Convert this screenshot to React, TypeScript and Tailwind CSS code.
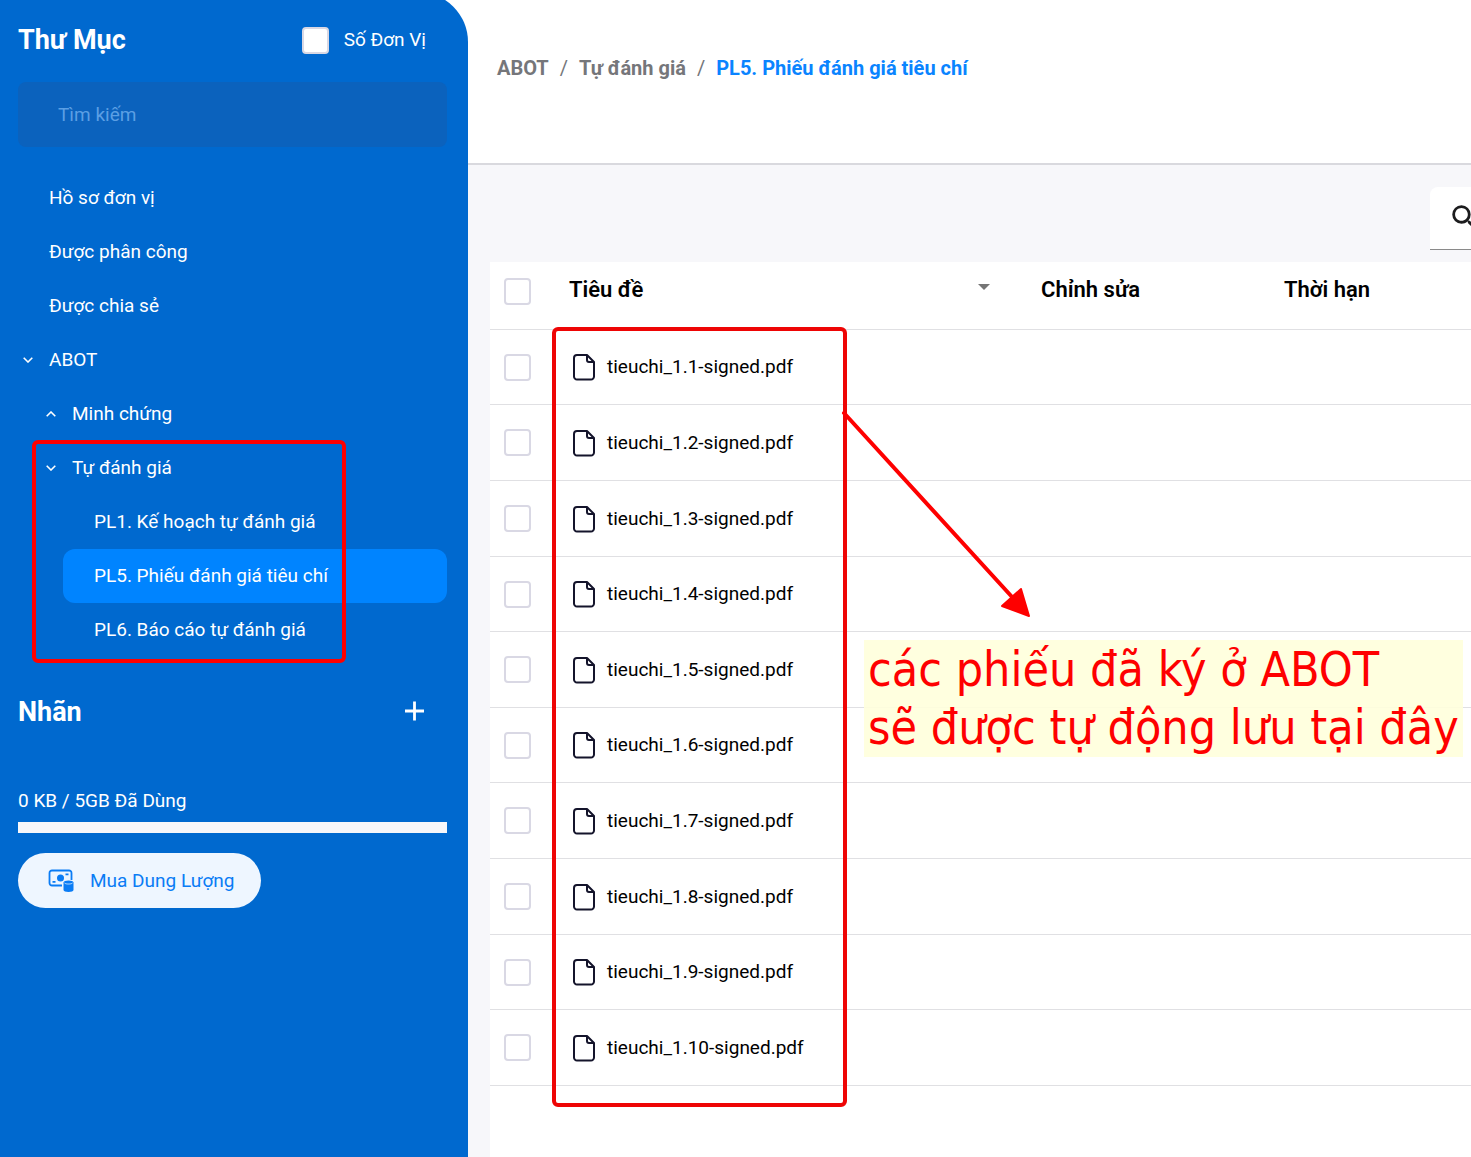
import { useState } from "react";

interface TreeItem {
  label: string;
  level: number;
  state?: "open" | "closed";
}

const folders: TreeItem[] = [
  { label: "Hồ sơ đơn vị", level: 0 },
  { label: "Được phân công", level: 0 },
  { label: "Được chia sẻ", level: 0 },
  { label: "ABOT", level: 0, state: "open" },
  { label: "Minh chứng", level: 1, state: "closed" }
];

const selfReview: TreeItem[] = [
  { label: "Tự đánh giá", level: 1, state: "open" },
  { label: "PL1. Kế hoạch tự đánh giá", level: 2 },
  { label: "PL5. Phiếu đánh giá tiêu chí", level: 2 },
  { label: "PL6. Báo cáo tự đánh giá", level: 2 }
];

const files = Array.from({ length: 10 }, (_, i) => `tieuchi_1.${i + 1}-signed.pdf`);

const indents = ["ml-0", "ml-[23px]", "ml-[45px]"];

function Chevron({ up }: { up?: boolean }) {
  return (
    <svg viewBox="0 0 10 6" className="h-[6px] w-[10px]" fill="none" stroke="currentColor" strokeWidth={1.6}>
      <path d={up ? "M.7 5.2 5 1l4.3 4.2" : "M.7.8 5 5 9.3.8"} />
    </svg>
  );
}

function FileIcon() {
  return (
    <svg viewBox="0 0 22 28" className="h-7 w-[22px] shrink-0" fill="none" stroke="#14142b" strokeWidth={2} strokeLinejoin="round">
      <path d="M4 2h10l7 7v14.5a3 3 0 0 1-3 3H4a3 3 0 0 1-3-3V5a3 3 0 0 1 3-3Z" />
      <path d="M14 2v5a2 2 0 0 0 2 2h5" />
    </svg>
  );
}

function StorageIcon() {
  return (
    <svg viewBox="0 0 26 24" className="h-6 w-[26px]" fill="none" stroke="currentColor" strokeWidth={1.8}>
      <path d="M14 16.5H4A2.5 2.5 0 0 1 1.5 14V4A2.5 2.5 0 0 1 4 1.500h17A2.500 2.500 0 0 1 23.500 4v7" />
      <circle cx="12.500" cy="9" r="3.500" fill="currentColor" stroke="none" />
      <path d="M17.500 5.300h3M4.500 12.800h3" />
      <path
        d="M15.500 13.500c0-1.200 2.200-2 5-2s5 .8 5 2v7.500c0 1.200-2.200 2-5 2s-5-.8-5-2Z"
        fill="currentColor"
        stroke="none"
      />
      <path d="M16.500 14c1 .9 2.500 1 4 1s3-.1 4-1" stroke="#eef6ff" strokeWidth={0.8} />
    </svg>
  );
}

function Checkbox({ id, label }: { id: string; label?: string }) {
  return (
    <input
      id={id}
      type="checkbox"
      aria-label={label}
      className="block size-[27px] shrink-0 appearance-none rounded border-2 border-[#d9d8e4] bg-white checked:bg-[#0084ff]"
    />
  );
}

export default function App() {
  const [active, setActive] = useState("PL5. Phiếu đánh giá tiêu chí");

  const renderItem = (item: TreeItem) => (
    <li key={item.label} className={indents[item.level]}>
      <button
        type="button"
        onClick={() => setActive(item.label)}
        className={`flex h-[54px] w-full items-center rounded-xl text-left ${
          item.label === active ? "bg-[#0084ff]" : ""
        }`}
      >
        <span className="flex w-[31px] shrink-0 pl-[5px]">
          {item.state && <Chevron up={item.state === "closed"} />}
        </span>
        {item.label}
      </button>
    </li>
  );

  return (
    <div className="flex min-h-screen overflow-hidden bg-white font-[Roboto,sans-serif] text-[19px] leading-6 text-black">
      {/* Sidebar */}
      <aside className="-mt-2 w-[468px] shrink-0 rounded-tr-[50px] bg-[#0069cf] pt-8 pr-[21px] pl-[18px] text-white">
        <div className="flex items-end justify-between pr-[21px]">
          <h1 className="text-[27px] leading-8 font-bold">Thư Mục</h1>
          <label htmlFor="show-units" className="flex h-8 items-center gap-[15px]">
            <Checkbox id="show-units" />
            Số Đơn Vị
          </label>
        </div>

        <input
          type="search"
          aria-label="Tìm kiếm"
          placeholder="Tìm kiếm"
          className="mt-[26px] h-[65px] w-full rounded-lg bg-[#0b62bd] px-10 outline-none placeholder:text-[#5b9fe4]"
        />

        <nav className="mt-6">
          <ul>{folders.map(renderItem)}</ul>
          <div className="relative">
            <ul>{selfReview.map(renderItem)}</ul>
            <div className="pointer-events-none absolute -top-px left-[14px] h-[223px] w-[314px] rounded-md border-4 border-[#fe0000]" />
          </div>
        </nav>

        <div className="mt-[39px] flex items-center justify-between pr-[21px]">
          <h2 className="text-[27px] leading-8 font-bold">Nhãn</h2>
          <button type="button" aria-label="Thêm nhãn">
            <svg viewBox="0 0 24 24" className="size-6" fill="none" stroke="currentColor" strokeWidth={2.8}>
              <path d="M12.500 1.500v19M3 11h19" />
            </svg>
          </button>
        </div>

        <p className="mt-[61px]">0 KB / 5GB Đã Dùng</p>
        <div className="mt-[9px] h-[11px] bg-[#f7f7fa]" />
        <button
          type="button"
          className="mt-5 flex h-[55px] items-center gap-4 rounded-full bg-[#eef6ff] pr-[26px] pl-[30px] text-[#0a7cf5]"
        >
          <StorageIcon />
          Mua Dung Lượng
        </button>
      </aside>

      {/* Main area */}
      <main className="flex min-w-0 flex-1 flex-col overflow-hidden bg-[#f7f7fa]">
        <header className="h-[165px] border-b-2 border-[#d9d9de] bg-white pt-14 pl-[29px]">
          <nav aria-label="Breadcrumb" className="flex gap-[11px] text-[20px] font-bold text-[#75767a]">
            <a href="#abot">ABOT</a>
            <span className="font-normal">/</span>
            <a href="#tu-danh-gia">Tự đánh giá</a>
            <span className="font-normal">/</span>
            <a href="#pl5" className="text-[#0a84ff]">PL5. Phiếu đánh giá tiêu chí</a>
          </nav>
        </header>

        <div className="flex h-[97px] justify-end pt-[22px]">
          <div className="-mr-[215px] flex h-[63px] w-64 items-center gap-3 rounded-t-lg border-b border-[#8a8a8a] bg-white pl-[18px]">
            <svg viewBox="0 0 24 24" className="size-[34px] shrink-0" fill="#1c1c1e">
              <path d="M15.500 14h-.79l-.28-.27A6.471 6.471 0 0 0 16 9.500 6.500 6.500 0 1 0 9.500 16c1.610 0 3.090-.59 4.230-1.570l.27.28v.79l5 4.990L20.490 19zm-6 0C7.010 14 5 11.990 5 9.500S7.010 5 9.500 5 14 7.010 14 9.500 11.990 14 9.500 14" />
            </svg>
            <input type="search" aria-label="Tìm tài liệu" className="min-w-0 flex-1 outline-none" />
          </div>
        </div>

        <section className="relative ml-[22px] flex-1 bg-white">
          <table className="w-full table-fixed border-separate border-spacing-0 text-left">
            <colgroup>
              <col className="w-[79px]" />
              <col className="w-[472px]" />
              <col className="w-[243px]" />
              <col />
            </colgroup>
            <thead>
              <tr className="h-[68px] text-[22px] [&>th]:border-b [&>th]:border-[#e0e0e3] [&>th]:pb-3 [&>th]:font-semibold">
                <th className="pt-1 pl-[14px]">
                  <Checkbox id="all" label="Chọn tất cả" />
                </th>
                <th>
                  <div className="flex items-center justify-between pr-[51px]">
                    Tiêu đề
                    <svg viewBox="0 0 12 12" className="size-3" fill="#757575">
                      <path d="M0 0h12L6 6Z" />
                    </svg>
                  </div>
                </th>
                <th>Chỉnh sửa</th>
                <th>Thời hạn</th>
              </tr>
            </thead>
            <tbody>
              {files.map((name) => (
                <tr
                  key={name}
                  className="h-[76px] nth-[5n+1]:h-[75px] nth-[5n+4]:h-[75px] [&>td]:border-b [&>td]:border-[#e0e0e3]"
                >
                  <td className="pl-[14px]">
                    <Checkbox id={name} label={name} />
                  </td>
                  <td>
                    <div className="flex items-center gap-3 pl-1">
                      <FileIcon />
                      {name}
                    </div>
                  </td>
                  <td />
                  <td />
                </tr>
              ))}
            </tbody>
          </table>

          {/* Callout over the file list */}
          <div className="pointer-events-none absolute top-[65px] left-[62px] h-[780px] w-[295px] rounded-md border-4 border-[#ee0505]" />
          <svg
            viewBox="0 0 190 208"
            className="pointer-events-none absolute top-[148px] left-[351px] h-[208px] w-[190px]"
            fill="#fe0000"
            stroke="#fe0000"
            strokeLinejoin="round"
            strokeLinecap="round"
          >
            <path d="M3 3 172 188" strokeWidth={4} />
            <path d="M161 196 180 179 188 206Z" strokeWidth={2} />
          </svg>
          <p className="absolute top-[378px] left-[374px] bg-[#ffffdc]/90 px-1 pb-px font-['DejaVu_Sans_Condensed','Noto_Sans',sans-serif] text-[48px] leading-[58px] whitespace-nowrap text-[#fe0000]">
            các phiếu đã ký ở ABOT
            <br />
            sẽ được tự động lưu tại đây
          </p>
        </section>
      </main>
    </div>
  );
}
